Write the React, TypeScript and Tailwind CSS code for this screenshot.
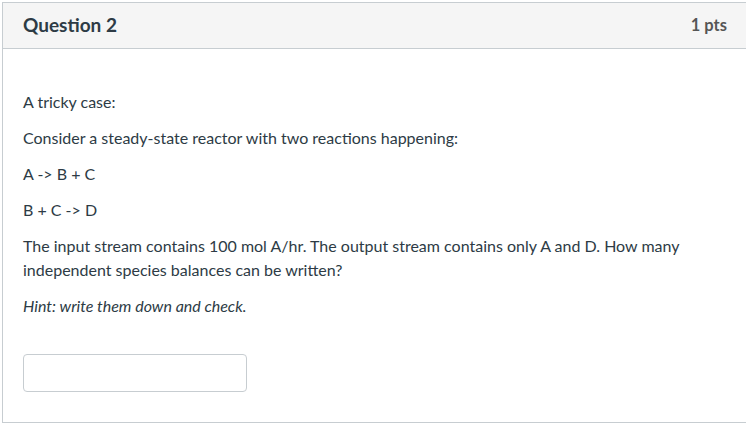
import React from 'react';

export default function App() {
  return (
    <div className="w-[746px] h-[426px] bg-white pt-[2px] pl-[2px] overflow-hidden" style={{ fontFamily: 'Lato, "Open Sans", sans-serif' }}>
      <div className="w-[746px] h-[421px] border border-[#c7cdd1] border-r-0">
        {/* Header */}
        <div className="h-[46px] bg-[#f5f5f5] border-b border-[#c7cdd1] flex items-center justify-between pl-[20px] pr-[21px]">
          <h2 className="text-[19px] font-bold text-[#2d3b45]">Question 2</h2>
          <span className="text-[16.5px] font-bold text-[#555]">1 pts</span>
        </div>

        {/* Body */}
        <div className="pl-[20px] pr-[40px] pt-[41px] text-[16px] leading-[24px] text-[#2d3b45]">
          <p className="mb-[12px]">A tricky case:</p>
          <p className="mb-[12px]">Consider a steady-state reactor with two reactions happening:</p>
          <p className="mb-[12px]">A -&gt; B + C</p>
          <p className="mb-[12px]">B + C -&gt; D</p>
          <p className="mb-[12px]">
            The input stream contains 100 mol A/hr. The output stream contains only A and D. How many independent species balances can be written?
          </p>
          <p className="italic">Hint: write them down and check.</p>

          <input
            type="text"
            className="mt-[36px] w-[224px] h-[38px] border border-[#c7cdd1] rounded-[4px] bg-white outline-none"
          />
        </div>
      </div>
    </div>
  );
}
